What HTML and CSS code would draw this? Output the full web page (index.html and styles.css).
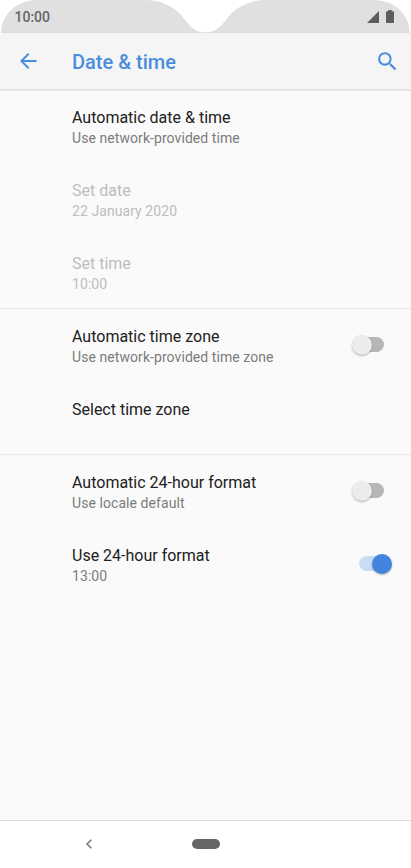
FILE: index.html
```html
<!DOCTYPE html>
<html lang="en">
<head>
<meta charset="utf-8">
<title>Date &amp; time</title>
<link rel="stylesheet" href="styles.css">
</head>
<body>
<div class="screen">
  <div class="status-bar">
    <svg class="cutout" viewBox="0 0 411 33" aria-hidden="true"><path d="M1 33C2 14 16 0 38 0H145C160 0 173 6 181 15C188 23 193 32.500 205.500 32.500C218 32.500 223 23 230 15C238 6 251 0 266 0H373C395 0 409 14 410 33Z"/></svg>
    <span class="clock">10:00</span>
    <svg class="signal" viewBox="0 0 12 12" aria-hidden="true"><path d="M0 12L12 0V12Z"/></svg>
    <svg class="battery" viewBox="0 0 8 13" aria-hidden="true"><path d="M2.300 0H5.700V1.200H7Q8 1.200 8 2.200V12Q8 13 7 13H1Q0 13 0 12V2.200Q0 1.200 1 1.200H2.300Z"/></svg>
  </div>
  <header class="app-bar">
    <svg class="icon" viewBox="0 0 24 24" aria-label="Back"><path d="M20.500 11H7.830l5.590-5.590L12 4l-8 8 8 8 1.410-1.410L7.830 13H20.500v-2z"/></svg>
    <h1>Date &amp; time</h1>
    <svg class="icon search" viewBox="0 0 24 24" aria-label="Search"><path d="M15.500 14h-.79l-.28-.27A6.471 6.471 0 0 0 16 9.500 6.500 6.500 0 1 0 9.500 16c1.610 0 3.090-.59 4.230-1.570l.27.28v.79l5 4.990L20.490 19l-4.990-5zm-6 0C7.010 14 5 11.990 5 9.500S7.010 5 9.500 5 14 7.010 14 9.500 11.990 14 9.500 14z"/></svg>
  </header>
  <main class="settings">
    <section class="group">
      <div class="row"><div class="text"><div class="title">Automatic date &amp; time</div><div class="summary">Use network-provided time</div></div></div>
      <div class="row disabled"><div class="text"><div class="title">Set date</div><div class="summary">22 January 2020</div></div></div>
      <div class="row disabled"><div class="text"><div class="title">Set time</div><div class="summary">10:00</div></div></div>
    </section>
    <section class="group">
      <div class="row"><div class="text"><div class="title">Automatic time zone</div><div class="summary">Use network-provided time zone</div></div><div class="switch"></div></div>
      <div class="row"><div class="text"><div class="title">Select time zone</div></div></div>
    </section>
    <section class="group">
      <div class="row"><div class="text"><div class="title">Automatic 24-hour format</div><div class="summary">Use locale default</div></div><div class="switch"></div></div>
      <div class="row"><div class="text"><div class="title">Use 24-hour format</div><div class="summary">13:00</div></div><div class="switch on"></div></div>
    </section>
  </main>
  <nav class="nav-bar">
    <svg class="nav-back" viewBox="0 0 6 10" aria-label="Back"><path d="M5.300 .7L1 5L5.300 9.300"/></svg>
    <div class="home-pill"></div>
  </nav>
</div>
</body>
</html>
```

FILE: styles.css
```css
* { box-sizing: border-box; }
body {
  margin: 0;
  background: #fff;
  font-family: Roboto, "Liberation Sans", sans-serif;
}
.screen {
  display: flex;
  flex-direction: column;
  width: 411px;
  height: 868px;
  overflow: hidden;
}
.status-bar {
  position: relative;
  display: flex;
  flex: none;
  align-items: center;
  height: 33px;
  padding: 0 17px 0 14.5px;
}
.cutout {
  position: absolute;
  inset: 0;
  width: 411px;
  height: 33px;
  fill: #e0e0e0;
}
.clock {
  position: relative;
  flex: 1;
  padding-top: 1px;
  font-size: 14px;
  line-height: 16px;
  font-weight: 500;
  color: #666;
}
.signal, .battery { position: relative; fill: #5c5c5c; }
.signal { width: 12px; height: 12px; margin-right: 7px; }
.battery { width: 8px; height: 13px; }
.app-bar {
  position: relative;
  display: flex;
  flex: none;
  align-items: center;
  height: 56px;
  padding: 0 11px 0 16px;
  background: #f5f5f5;
  box-shadow: 0 1px 2px rgba(0, 0, 0, .17);
}
.icon { width: 24px; height: 24px; fill: #4a8ddd; }
.search { width: 25px; height: 25px; }
.app-bar h1 {
  flex: 1;
  margin: 1px 0 0 32px;
  font-size: 20px;
  line-height: 24px;
  font-weight: 500;
  color: #4a8ddd;
}
.settings {
  flex: 1;
  padding-top: 1px;
  background: #fafafa;
}
.group + .group { box-shadow: 0 -1px #ebebeb, inset 0 1px #f4f4f4; }
.row {
  display: flex;
  height: 73px;
  padding: 17px 19px 0 72px;
}
.text { flex: 1; }
.title {
  font-size: 16px;
  line-height: 21px;
  color: #212121;
}
.summary {
  font-size: 14px;
  line-height: 20px;
  letter-spacing: .07px;
  color: #7c7c7c;
}
.disabled .title, .disabled .summary { color: #bdbdbd; }
.switch {
  display: flex;
  align-items: center;
  width: 32px;
  height: 15px;
  margin: 11px 8px 0 0;
  border-radius: 8px;
  background: linear-gradient(90deg, transparent 8px, #b7b7b7 8px);
}
.switch::before {
  content: "";
  width: 20px;
  height: 20px;
  border-radius: 50%;
  background: #ececec;
  box-shadow: 0 1px 2px rgba(0, 0, 0, .3);
}
.switch.on {
  justify-content: flex-end;
  width: 33px;
  margin-right: 0;
  background: linear-gradient(90deg, #c9dcf5 24px, transparent 24px);
}
.switch.on::before { background: #4285e0; }
.nav-bar {
  display: flex;
  flex: none;
  align-items: center;
  height: 48px;
  padding: 0 0 1px 86px;
  border-top: 1px solid #dcdcdc;
  background: #fff;
}
.nav-back {
  width: 6px;
  height: 10px;
  margin-right: 100px;
  fill: none;
  stroke: #707070;
  stroke-width: 1.5;
}
.home-pill {
  width: 28px;
  height: 10px;
  border-radius: 5px;
  background: #666;
}
```
